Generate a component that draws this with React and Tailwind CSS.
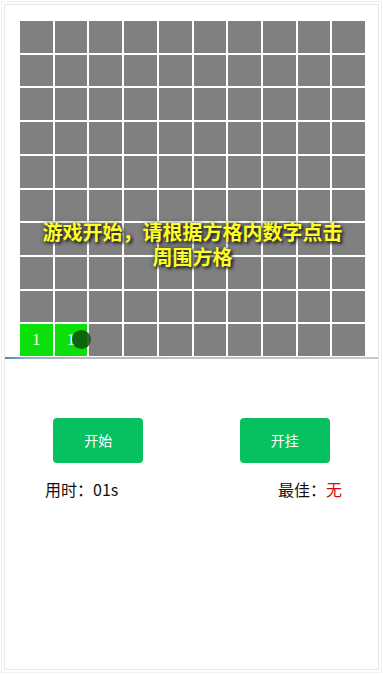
import React from "react";

export default function App() {
  const cells = Array.from({ length: 100 }, (_, i) => i);
  return (
    <div className="w-[383px] h-[674px] bg-white p-[1px] font-['Noto_Sans_CJK_SC',sans-serif]">
      <div className="h-full border border-[#f0f0f0] p-[2px]">
        <div className="h-full border border-[#e8e8e8] flex flex-col">
          <div className="relative pl-[15px] pr-[13px] pt-[16px] pb-[1px] border-b-2 border-transparent [border-image:linear-gradient(90deg,#3a86c4_0%,#8fb0c8_6%,#b8b8b8_20%,#c8c8c8_100%)_1]">
            <div className="relative w-[345px] h-[335px] grid grid-cols-10 grid-rows-10 gap-[2px]">
              {cells.map((i) =>
                i === 90 || i === 91 ? (
                  <div
                    key={i}
                    className="bg-[#0be00b] flex items-center justify-center text-white text-[17px] font-['Liberation_Serif',serif]"
                  >
                    1
                  </div>
                ) : (
                  <div key={i} className="bg-[#808080]" />
                )
              )}
              <div className="absolute left-[52px] top-[309px] w-[19px] h-[19px] rounded-full bg-[#0d4f0d]/85 blur-[0.6px]" />
              <div className="absolute left-0 right-0 top-[198px] flex justify-center">
                <div className="w-[310px] text-center text-[20px] leading-[25px] font-bold text-[#ffff22] [text-shadow:2px_2px_3px_#222,0_0_5px_#333]">
                  游戏开始，请根据方格内数字点击周围方格
                </div>
              </div>
            </div>
          </div>
          <div className="pt-[59px]">
            <div className="grid grid-cols-2">
              <div className="flex justify-center">
                <button className="w-[90px] h-[45px] rounded-[4px] bg-[#07c160] text-white text-[14px]">
                  开始
                </button>
              </div>
              <div className="flex justify-center">
                <button className="w-[90px] h-[45px] rounded-[4px] bg-[#07c160] text-white text-[14px]">
                  开挂
                </button>
              </div>
            </div>
            <div className="mt-[17px] flex justify-between pl-[40px] pr-[36px] text-[16px] leading-[18px] text-[#111]">
              <span>用时：01s</span>
              <span>
                最佳：<span className="text-[#d01010]">无</span>
              </span>
            </div>
          </div>
        </div>
      </div>
    </div>
  );
}
